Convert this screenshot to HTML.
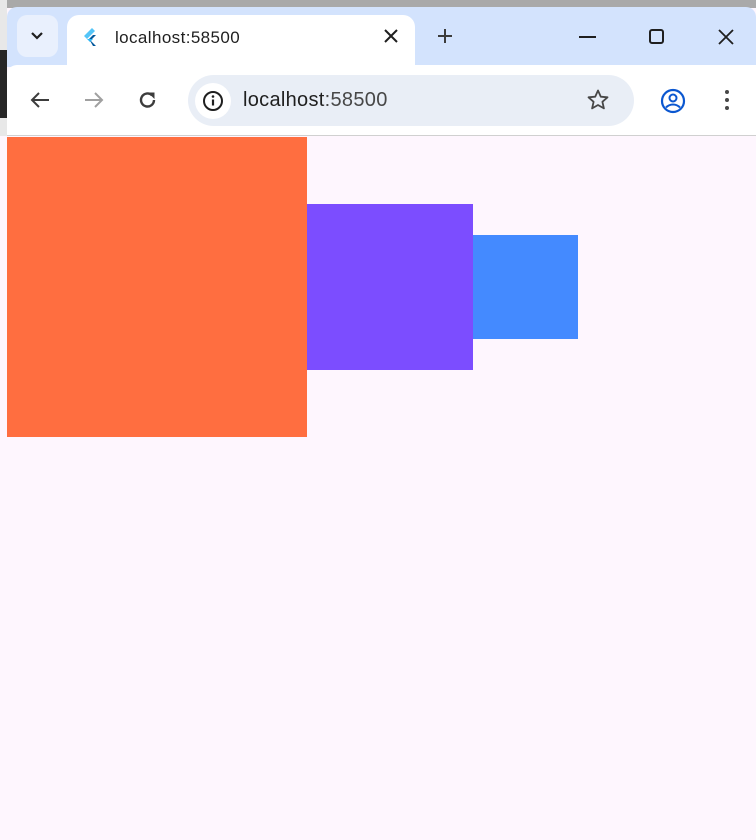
<!DOCTYPE html>
<html><head><style>
*{margin:0;padding:0;box-sizing:border-box}
body{width:756px;height:840px;overflow:hidden;background:#fef6fe;position:relative;font-family:"Liberation Sans",sans-serif}
.a{position:absolute}
</style></head><body>
<div class="a" style="left:0;top:0;width:756px;height:8px;background:#a9a9a9"></div>
<div class="a" style="left:0;top:0;width:7px;height:136px;background:#e8e8e8"></div>
<div class="a" style="left:0;top:50px;width:7px;height:68px;background:#262626"></div>
<div class="a" style="left:7px;top:7px;width:749px;height:60px;background:#d3e3fd;border-radius:10px 10px 0 0"></div>
<div class="a" style="left:17px;top:15px;width:41px;height:42px;background:#e9f0fd;border-radius:10px"></div>
<svg class="a" style="left:30px;top:31px" width="14" height="10"><path d="M2 2l5 5 5-5" stroke="#1f1f1f" stroke-width="2.2" fill="none"/></svg>
<div class="a" style="left:67px;top:15px;width:348px;height:52px;background:#fff;border-radius:12px 12px 0 0"></div>
<svg class="a" style="left:82px;top:27px" width="16" height="20"><path d="M10 1L2 9l3 3 8-8z" fill="#54c5f8"/><path d="M7 12l4-4h3l-5.5 5.5L14 19h-3z" fill="#01579b"/><path d="M5 12l3 3 3-3" fill="#29b6f6"/></svg>
<div class="a" style="left:115px;top:28px;font-size:17px;letter-spacing:0.4px;color:#1f1f1f">localhost:58500</div>
<svg class="a" style="left:383px;top:28px" width="16" height="16"><path d="M2 2l12 12M14 2L2 14" stroke="#1f1f1f" stroke-width="2"/></svg>
<svg class="a" style="left:436px;top:27px" width="18" height="18"><path d="M9 2v14M2 9h14" stroke="#3c3c3c" stroke-width="2"/></svg>
<div class="a" style="left:579px;top:36px;width:17px;height:2px;background:#1f1f1f"></div>
<div class="a" style="left:649px;top:29px;width:15px;height:15px;border:2px solid #1f1f1f;border-radius:3px"></div>
<svg class="a" style="left:717px;top:28px" width="18" height="18"><path d="M2 2l14 14M16 2L2 16" stroke="#1f1f1f" stroke-width="1.8"/></svg>
<div class="a" style="left:7px;top:65px;width:749px;height:70px;background:#fff;border-radius:10px 0 0 0"></div>
<svg class="a" style="left:29px;top:90px" width="22" height="20"><path d="M20 10H3M10 3L3 10l7 7" stroke="#3c3c3c" stroke-width="2" fill="none"/></svg>
<svg class="a" style="left:83px;top:90px" width="22" height="20"><path d="M2 10h17M12 3l7 7-7 7" stroke="#a0a0a0" stroke-width="2" fill="none"/></svg>
<svg class="a" style="left:137px;top:89px" width="22" height="22"><path d="M17 11a6.5 6.5 0 1 1-2-4.7" stroke="#3c3c3c" stroke-width="2.4" fill="none"/><path d="M11 3.5h6.5v6.5z" fill="#3c3c3c"/></svg>
<div class="a" style="left:188px;top:75px;width:446px;height:51px;background:#e9eef6;border-radius:26px"></div>
<div class="a" style="left:195px;top:83px;width:36px;height:36px;background:#fff;border-radius:50%"></div>
<svg class="a" style="left:202px;top:90px" width="22" height="22"><circle cx="11" cy="11" r="9" stroke="#1f1f1f" stroke-width="2" fill="none"/><path d="M11 9.5v6" stroke="#1f1f1f" stroke-width="2.2"/><circle cx="11" cy="6.5" r="1.3" fill="#1f1f1f"/></svg>
<div class="a" style="left:243px;top:89px;font-size:20px;letter-spacing:0.3px;color:#1f1f1f">localhost<span style="color:#474747">:58500</span></div>
<svg class="a" style="left:586px;top:88px" width="24" height="24"><path d="M12 2.5l2.8 6.2 6.7.6-5.1 4.5 1.5 6.6L12 17l-5.9 3.4 1.5-6.6-5.1-4.5 6.7-.6z" stroke="#474747" stroke-width="1.8" fill="none" stroke-linejoin="round"/></svg>
<svg class="a" style="left:660px;top:88px" width="26" height="26"><circle cx="13" cy="13" r="11" stroke="#0b57d0" stroke-width="2.2" fill="none"/><circle cx="13" cy="10" r="3.5" stroke="#0b57d0" stroke-width="2" fill="none"/><path d="M6 19.5c4-4 10-4 14 0" stroke="#0b57d0" stroke-width="2" fill="none"/></svg>
<div class="a" style="left:725px;top:90px;width:4px;height:4px;background:#474747;border-radius:50%"></div>
<div class="a" style="left:725px;top:98px;width:4px;height:4px;background:#474747;border-radius:50%"></div>
<div class="a" style="left:725px;top:106px;width:4px;height:4px;background:#474747;border-radius:50%"></div>
<div class="a" style="left:7px;top:135px;width:749px;height:1px;background:#d0d0d0"></div>
<div class="a" style="left:7px;top:136px;width:749px;height:704px;background:#fef6fe"></div>
<div class="a" style="left:7px;top:137px;width:300px;height:300px;background:#ff6e40"></div>
<div class="a" style="left:307px;top:204px;width:166px;height:166px;background:#7c4dff"></div>
<div class="a" style="left:473px;top:235px;width:105px;height:104px;background:#448aff"></div>
</body></html>
